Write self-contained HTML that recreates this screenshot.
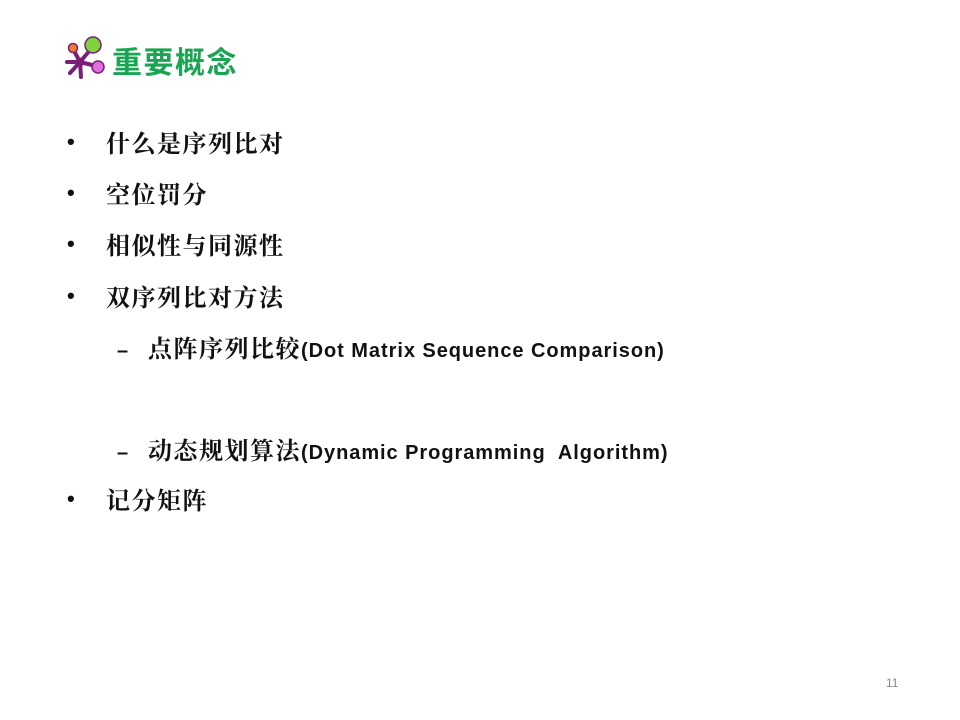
<!DOCTYPE html>
<html><head><meta charset="utf-8"><style>
body{margin:0;width:960px;height:720px;background:#fff;position:relative;overflow:hidden;font-family:"Liberation Sans","Noto Serif CJK SC",serif;}
.t{position:absolute;left:112px;top:40px;font:bold 30px "Noto Sans CJK SC",sans-serif;color:#1aa553;letter-spacing:1.5px;line-height:40px}
.b{position:absolute;left:67px;font-size:24px;font-weight:bold;color:#111;line-height:30px;white-space:nowrap}
.b span.d{display:inline-block;width:39px;font-size:22px;vertical-align:top}
.b .c{font-family:"Noto Serif CJK SC",serif;letter-spacing:1.5px}
.s{position:absolute;left:117px;font-size:24px;font-weight:bold;color:#111;line-height:30px;white-space:nowrap}
.s .c{font-family:"Noto Serif CJK SC",serif;letter-spacing:1.5px}
.s .l{font-family:"Liberation Sans",sans-serif;font-size:20px;letter-spacing:0.95px}
.n{position:absolute;left:886px;top:676px;font-size:12px;color:#888}
</style></head><body>
<svg style="position:absolute;left:62px;top:36px" width="48" height="46" viewBox="62 36 48 46">
<g stroke="#7a1e78" stroke-width="4" stroke-linecap="round" fill="none">
<path d="M80 62 L73 49"/><path d="M80 62 L91 49"/><path d="M80 62 L96 66"/><path d="M80 62 L67 62"/><path d="M80 62 L70 73"/><path d="M80 62 L81 77"/>
</g>
<circle cx="80" cy="62" r="4.5" fill="#7a1e78"/>
<circle cx="73" cy="48" r="4.5" fill="#f07a2a" stroke="#7a1e78" stroke-width="1.5"/>
<circle cx="93" cy="45" r="8" fill="#7ed23a" stroke="#7a1e78" stroke-width="1.5"/>
<circle cx="98" cy="67" r="6" fill="#e070e0" stroke="#7a1e78" stroke-width="1.5"/>
</svg>
<div class="t">重要概念</div>
<div class="b" style="top:127px"><span class="d">•</span><span class="c">什么是序列比对</span></div>
<div class="b" style="top:178px"><span class="d">•</span><span class="c">空位罚分</span></div>
<div class="b" style="top:229px"><span class="d">•</span><span class="c">相似性与同源性</span></div>
<div class="b" style="top:281px"><span class="d">•</span><span class="c">双序列比对方法</span></div>
<div class="s" style="top:332px"><span style="display:inline-block;width:31px;font-size:20px">–</span><span class="c">点阵序列比较</span><span class="l">(Dot Matrix Sequence Comparison)</span></div>
<div class="s" style="top:434px"><span style="display:inline-block;width:31px;font-size:20px">–</span><span class="c">动态规划算法</span><span class="l">(Dynamic Programming&nbsp; Algorithm)</span></div>
<div class="b" style="top:484px"><span class="d">•</span><span class="c">记分矩阵</span></div>
<div class="n">11</div>
</body></html>
